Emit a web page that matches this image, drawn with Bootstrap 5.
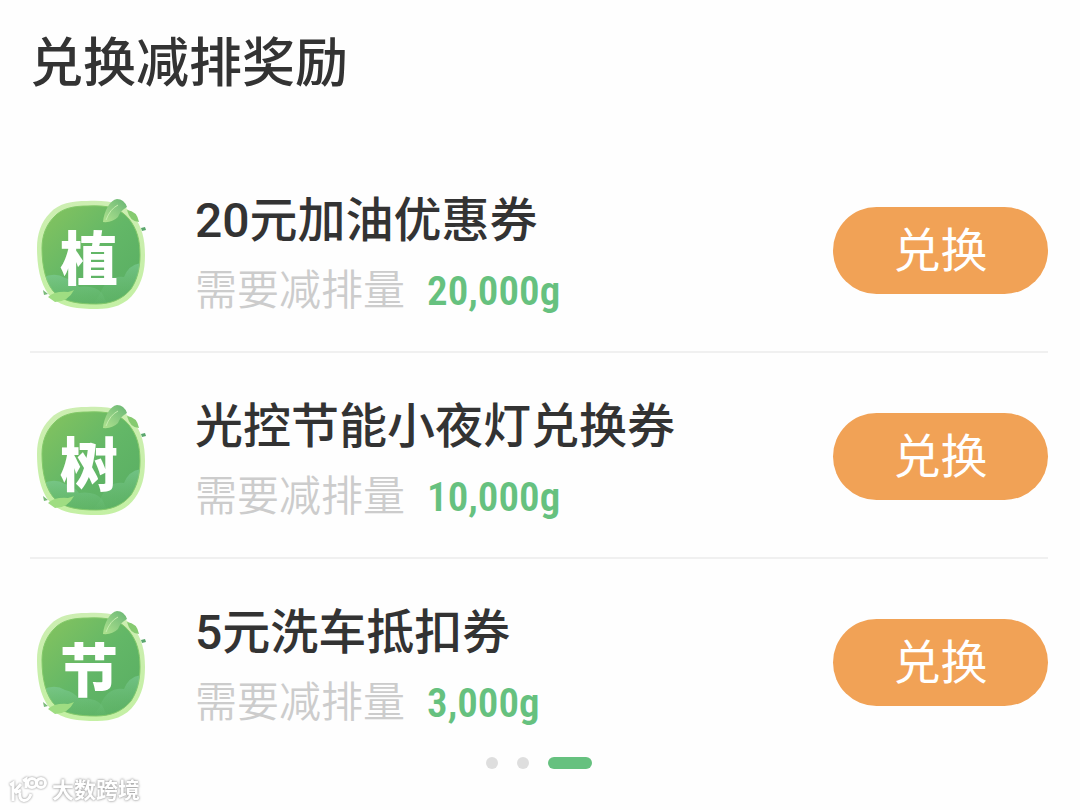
<!DOCTYPE html>
<html lang="zh-CN">
<head>
<meta charset="utf-8">
<meta name="viewport" content="width=device-width, initial-scale=1">
<title>兑换减排奖励</title>
<link rel="stylesheet" href="https://cdn.jsdelivr.net/npm/bootstrap@5.3.0/dist/css/bootstrap.min.css">
<style>
body{background:#fefefe;color:#333;font-family:"Roboto","Noto Sans CJK SC",sans-serif}
.panel{padding:32px 32px 0 30px}
.page-title{font-size:53px;line-height:64px;font-weight:500;margin-bottom:51px}
.reward{height:206px;padding-top:2px;border-bottom:2px solid #f0f0f0}
.reward:last-child{border-bottom-color:transparent}
.reward-icon{width:120px;height:120px;margin-right:45px}
.reward-icon text{font:900 58px "Noto Sans CJK SC",sans-serif;fill:#fff}
.reward-text{padding-top:12px}
.reward-name{font-size:48px;line-height:70px;font-weight:500;margin:0}
.reward-need{font-size:42px;line-height:70px;font-weight:350;color:#ccc;gap:22px}
.amount{font-family:"Roboto Condensed","Liberation Sans Narrow",sans-serif;font-size:41px;font-weight:600;color:#66c17f}
.btn-redeem{width:215px;height:87px;border-radius:44px;padding:0;font-size:47px;line-height:87px;color:#fff;
--bs-btn-bg:#f1a256;--bs-btn-border-color:#f1a256;--bs-btn-hover-bg:#e8954a;--bs-btn-hover-color:#fff;border:0}
.pager{gap:19px;margin-top:-8px}
.pager button{width:12px;height:12px;border:0;padding:0;border-radius:6px;background:#dedede}
.pager .current{width:44px;background:#66c17f}
.watermark{position:fixed;left:8px;bottom:3px;gap:4px;color:#fff;font-size:22px;line-height:32px;font-weight:700;
text-shadow:0 0 2px #999,0 0 3px #aaa}
.watermark svg{filter:drop-shadow(0 0 1px #888)}
</style>
</head>
<body>
<svg width="0" height="0" class="position-absolute" aria-hidden="true">
<defs>
<linearGradient id="face" x1="0" y1="0" x2="1" y2="1"><stop offset="0" stop-color="#86c45e"/><stop offset=".5" stop-color="#63b767"/><stop offset="1" stop-color="#58ad62"/></linearGradient>
<linearGradient id="rim" x1="0" y1="0" x2="0" y2="1"><stop offset="0" stop-color="#cdeeb2"/><stop offset="1" stop-color="#c4f0a4"/></linearGradient>
<linearGradient id="leaf" x1="0" y1="1" x2="1" y2="0"><stop offset="0" stop-color="#b0e38f"/><stop offset="1" stop-color="#68b574"/></linearGradient>
<linearGradient id="mist" x1="0" y1="0" x2="0" y2="1"><stop offset="0" stop-color="#7fcd9b" stop-opacity=".6"/><stop offset="1" stop-color="#6cbf72" stop-opacity="0"/></linearGradient>
<clipPath id="inside"><path d="M58 12C78 11 90 14 99 25C107 35 110 46 110 61C110 75 107 86 101 95C92 106 80 110 66 110C49 110 35 108 26 100C16 91 12 73 12 54C12 42 16 31 24 23C32 14 44 12 58 12Z"/></clipPath>
<g id="badge-art">
<path d="M57 7C80 6 94 9 103 21C112 32 115 45 115 61C115 77 112 88 105 98C96 111 82 115 67 115C48 115 32 113 22 104C11 94 7 74 7 54C7 40 11 28 20 19C29 9 42 7 57 7Z" fill="url(#rim)"/>
<path d="M58 12C78 11 90 14 99 25C107 35 110 46 110 61C110 75 107 86 101 95C92 106 80 110 66 110C49 110 35 108 26 100C16 91 12 73 12 54C12 42 16 31 24 23C32 14 44 12 58 12Z" fill="url(#face)" stroke="#83c969" stroke-width="1"/>
<g clip-path="url(#inside)">
<path d="M10 85Q24 77 35 84Q44 86 49 93Q64 91 72 99L80 116H10Z" fill="url(#mist)"/>
<path d="M70 100Q77 81 94 83Q99 70 112 69V115H60Z" fill="url(#mist)"/>
</g>
<path d="M73 28C74 17 80 6 87 5Q94 5 97 13Q90 17 88 23Q82 29 73 28Z" fill="url(#leaf)"/>
<path d="M76 26Q80 15 88 11" fill="none" stroke="#c6eeb0" stroke-width="1"/>
<path d="M97 16Q107 17 109 28Q100 28 97 16Z" fill="#86ca70"/>
<path d="M111 34L115 33L116 36L112 37Z" fill="#5aa66d"/>
<path d="M18 103Q24 97 38 98Q42 97 44 96Q38 108 25 108Z" fill="#9fdd82"/>
<path d="M13 96L18 100L14 101Z" fill="#79b979"/>
</g>
</defs>
</svg>
<main class="panel container-fluid">
<h1 class="page-title">兑换减排奖励</h1>
<ul class="list-unstyled mb-0">
<li class="reward d-flex align-items-center">
<svg class="reward-icon flex-shrink-0 mt-2" viewBox="0 0 120 120" role="img" aria-label="植"><use href="#badge-art"/><text x="30" y="86">植</text></svg>
<div class="reward-text flex-grow-1"><h2 class="reward-name">20元加油优惠券</h2><div class="reward-need d-flex"><span>需要减排量</span><span class="amount">20,000g</span></div></div>
<button type="button" class="btn btn-redeem flex-shrink-0">兑换</button>
</li>
<li class="reward d-flex align-items-center">
<svg class="reward-icon flex-shrink-0 mt-2" viewBox="0 0 120 120" role="img" aria-label="树"><use href="#badge-art"/><text x="30" y="86">树</text></svg>
<div class="reward-text flex-grow-1"><h2 class="reward-name">光控节能小夜灯兑换券</h2><div class="reward-need d-flex"><span>需要减排量</span><span class="amount">10,000g</span></div></div>
<button type="button" class="btn btn-redeem flex-shrink-0">兑换</button>
</li>
<li class="reward d-flex align-items-center">
<svg class="reward-icon flex-shrink-0 mt-2" viewBox="0 0 120 120" role="img" aria-label="节"><use href="#badge-art"/><text x="30" y="86">节</text></svg>
<div class="reward-text flex-grow-1"><h2 class="reward-name">5元洗车抵扣券</h2><div class="reward-need d-flex"><span>需要减排量</span><span class="amount">3,000g</span></div></div>
<button type="button" class="btn btn-redeem flex-shrink-0">兑换</button>
</li>
</ul>
<nav class="pager d-flex justify-content-center" aria-label="分页">
<button type="button" aria-label="第1页"></button><button type="button" aria-label="第2页"></button><button type="button" class="current" aria-label="第3页" aria-current="true"></button>
</nav>
</main>
<div class="watermark d-flex align-items-center">
<svg width="40" height="32" viewBox="0 0 40 32" fill="none" stroke="#fff" stroke-width="3" aria-hidden="true"><path d="M2 10L5 8V26M13 9L6 17M7 18L13 15M12 17C10 28 20 28 23 19M15 6L18 4V13"/><circle cx="24" cy="8" r="4.5"/><circle cx="33" cy="8" r="4.5"/></svg>
<span>大数跨境</span>
</div>
<script src="https://cdn.jsdelivr.net/npm/bootstrap@5.3.0/dist/js/bootstrap.bundle.min.js"></script>
</body>
</html>
